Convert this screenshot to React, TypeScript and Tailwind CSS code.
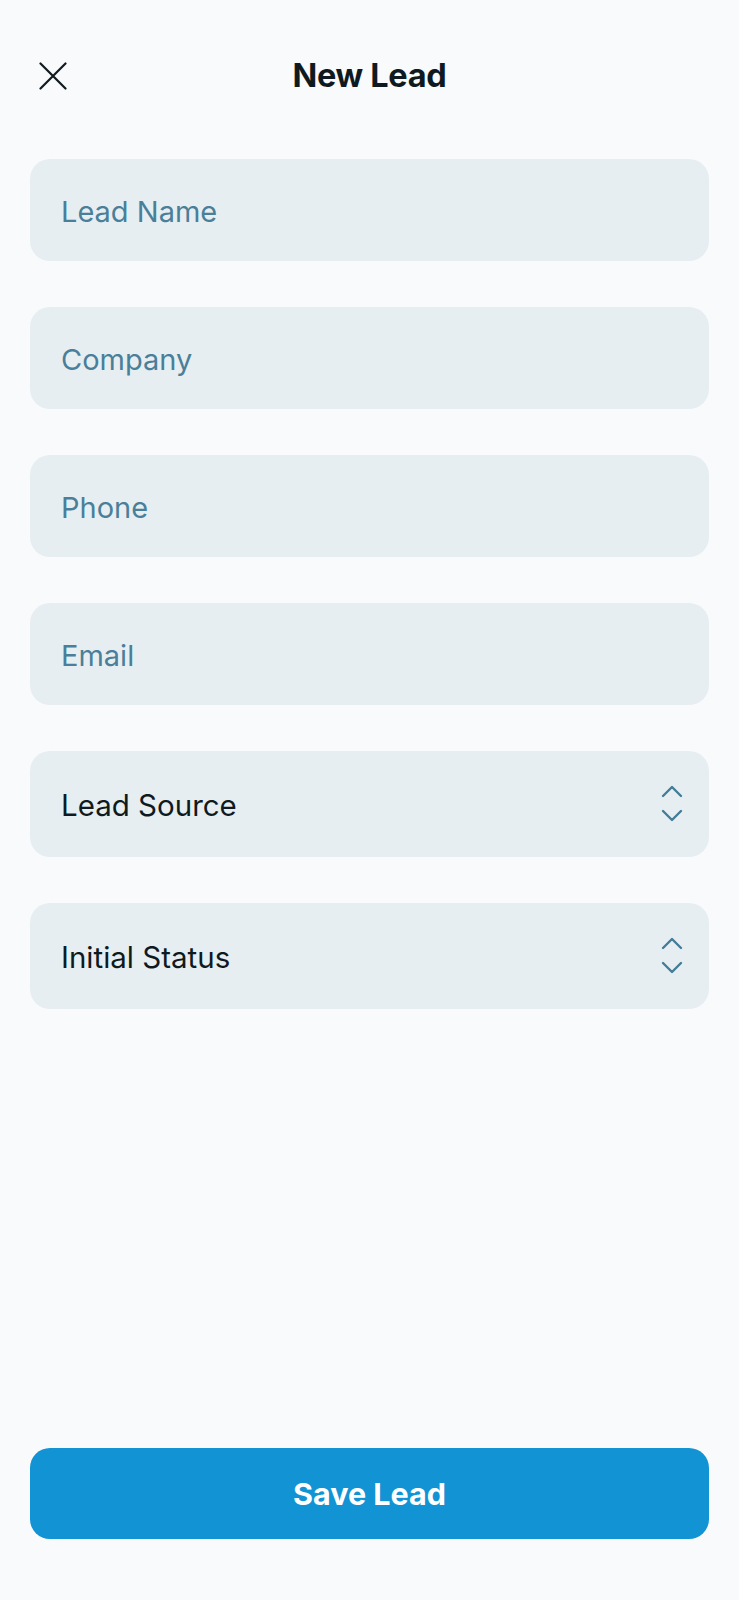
import React from 'react';

const FIELDS = ['Lead Name', 'Company', 'Phone', 'Email'];
const SELECTS = ['Lead Source', 'Initial Status'];

const CloseIcon: React.FC = () => (
  <svg width="28" height="28" viewBox="0 0 28 28" fill="none" stroke="#0f1a20" strokeWidth="2.2" strokeLinecap="round">
    <path d="M1.5 1.5 26.5 26.5M26.5 1.5 1.5 26.5" />
  </svg>
);

const UpDownIcon: React.FC = () => (
  <svg width="22" height="40" viewBox="0 0 22 40" fill="none" stroke="#427d98" strokeWidth="2.4" strokeLinecap="round" strokeLinejoin="round">
    <path d="M2 12 11 3l9 9" />
    <path d="M2 27l9 9 9-9" />
  </svg>
);

const TextField: React.FC<{ placeholder: string }> = ({ placeholder }) => (
  <input
    type="text"
    placeholder={placeholder}
    className="h-[102px] w-full rounded-[20px] bg-[#e7eef2] px-[31px] pt-[3px] text-[29px] text-[#0f1a20] placeholder:text-[#4a7f99] outline-none"
  />
);

const SelectField: React.FC<{ label: string }> = ({ label }) => (
  <button
    type="button"
    className="flex h-[106px] w-full items-center justify-between rounded-[20px] bg-[#e7eef2] pl-[31px] pr-[26px] text-left"
  >
    <span className="pt-[3px] text-[29.5px] text-[#0f1a20]">{label}</span>
    <UpDownIcon />
  </button>
);

export default function App() {
  return (
    <div className="flex min-h-[1600px] flex-col bg-[#f8fafb] font-['Inter',sans-serif]">
      <header className="mt-[48px] flex h-[56px] items-center px-[39px]">
        <button type="button" className="flex h-[28px] w-[28px] items-center justify-center">
          <CloseIcon />
        </button>
        <h1 className="flex-1 text-center text-[32.5px] font-bold tracking-[-0.01em] text-[#0f1a20]">New Lead</h1>
        <div className="w-[28px]" />
      </header>

      <form className="mt-[55px] flex flex-col gap-[46px] px-[30px]">
        {FIELDS.map(f => (
          <TextField key={f} placeholder={f} />
        ))}
        {SELECTS.map(s => (
          <SelectField key={s} label={s} />
        ))}
      </form>

      <div className="flex-1" />

      <div className="px-[30px] pb-[61px]">
        <button
          type="button"
          className="h-[91px] w-full rounded-[20px] bg-[#1193d4] text-[30.5px] font-bold text-white"
        >
          Save Lead
        </button>
      </div>
    </div>
  );
}
